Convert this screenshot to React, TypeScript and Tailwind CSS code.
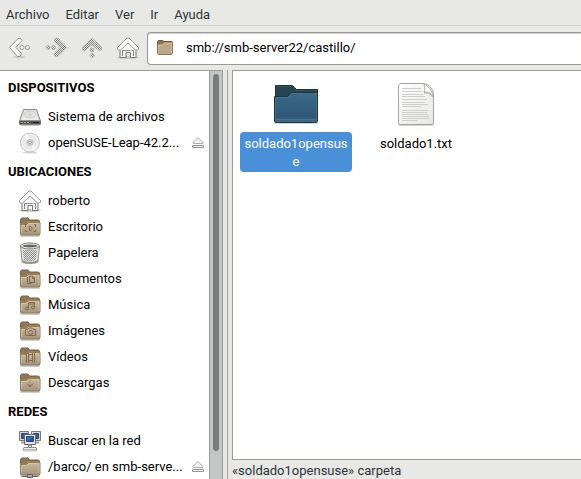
import { useId, type ReactNode } from "react";

type FolderEmblem = "desktop" | "documents" | "music" | "pictures" | "videos" | "downloads" | "network";

function Stipple({ id }: { id: string }) {
  return (
    <pattern id={id} width="2" height="2" patternUnits="userSpaceOnUse">
      <rect width="2" height="2" fill="#e8e8e7" />
      <rect width="1" height="1" fill="#858684" />
      <rect x="1" y="1" width="1" height="1" fill="#858684" />
    </pattern>
  );
}

function BackIcon() {
  return (
    <svg width="24" height="24" viewBox="0 0 24 24" aria-hidden="true">
      <ellipse cx="11" cy="21" rx="6" ry="1.500" fill="#cbcbca" />
      <path d="M10 2.500h2.500l1.500 2L8 11.500l5.500 6-1.500 3h-2.500L1.500 11.500z" fill="#f8f8f8" stroke="#8f908e" strokeLinejoin="round" />
      <circle cx="14" cy="11.500" r="2" fill="#f4f4f4" stroke="#999a98" />
      <circle cx="19.500" cy="11.500" r="2" fill="#f4f4f4" stroke="#999a98" />
    </svg>
  );
}

function ForwardIcon() {
  const id = useId();
  return (
    <svg width="24" height="24" viewBox="0 0 24 24" aria-hidden="true">
      <Stipple id={id} />
      <path d="M14 2h-3l-1 3 6 6.500-6 6 1 3h3l9-9z" fill={`url(#${id})`} stroke="#a8a9a7" strokeWidth=".5" />
      <g fill={`url(#${id})`} stroke="#b3b4b2">
        <circle cx="4" cy="11.500" r="2" />
        <circle cx="9.500" cy="11.500" r="2" />
      </g>
    </svg>
  );
}

function UpIcon() {
  const id = useId();
  return (
    <svg width="24" height="24" viewBox="0 0 24 24" aria-hidden="true">
      <Stipple id={id} />
      <path d="M12 2l-9.500 9v3l2 1 7.500-6 7.500 6 2-1v-3z" fill={`url(#${id})`} stroke="#a8a9a7" strokeWidth=".5" />
      <g fill={`url(#${id})`} stroke="#b3b4b2">
        <circle cx="12" cy="14" r="2" />
        <circle cx="12" cy="19.500" r="2" />
      </g>
    </svg>
  );
}

function HomeIcon() {
  return (
    <svg width="24" height="24" viewBox="0 0 24 24" aria-hidden="true">
      <ellipse cx="12" cy="21.500" rx="11" ry="1.500" fill="#c6c6c5" />
      <path d="M4 11v10.500h6v-5h4.500v5H20V11L12 4z" fill="#f4f4f4" stroke="#777876" />
      <path d="M6.500 20v-5.500h3M17.500 20v-5.500h-2M9.500 14.500h5" fill="none" stroke="#898a88" />
      <path d="M1.500 11.500L11 2h2l9.500 9.500v1.500l-1 1h-2L12 7l-7.500 7h-2l-1-1z" fill="#fcfcfc" stroke="#969795" strokeLinejoin="round" />
    </svg>
  );
}

function Emblem({ kind }: { kind: FolderEmblem }) {
  switch (kind) {
    case "desktop":
      return <path d="M7.500 12v-2.500H9M7.500 15v1.500H9M16 9.500h1.500V12M16 16.500h1.500V15M11.500 11.500v4h1l1.500-1v-2l-1.500-1z" />;
    case "documents":
      return <path d="M9.500 10v6.500h4M11.500 9h3l2 2v4.500h-5zM14.500 9v2.500H16" />;
    case "music":
      return (
        <>
          <path d="M10.500 15.500v-6h6v5M10.500 11h6" />
          <circle cx="9" cy="15.500" r="1.500" />
          <circle cx="15" cy="14.500" r="1.500" />
        </>
      );
    case "pictures":
      return (
        <>
          <path d="M7.500 10.500h2l1-1.500h4l1 1.500h2v6h-10z" />
          <circle cx="12.500" cy="13.500" r="2" />
        </>
      );
    case "videos":
      return <path d="M8.500 8v9.500M16.500 8v9.500M10.500 8v9.500M14.500 8v9.500M10.500 9.500h4M10.500 15.500h4" />;
    case "downloads":
      return <path d="M12 8.500v1M12 11v1M12 13v3M9 12.500l3 3.500 3-3.500" />;
    case "network":
      return (
        <g stroke="#62635f">
          <path d="M4 21.500h16" />
          <path d="M9.500 19.500h5v3h-5z" fill="#aaa" />
        </g>
      );
  }
}

function FolderIcon({ emblem }: { emblem?: FolderEmblem }) {
  const id = useId();
  return (
    <svg width="24" height="24" viewBox="0 0 24 24" aria-hidden="true">
      <linearGradient id={id} x2="0" y2="1">
        <stop stopColor="#c6b99f" />
        <stop offset="1" stopColor="#a59479" />
      </linearGradient>
      <rect x="2" y="19" width="20" height="3" rx="1" fill="#d0cfcd" />
      <path d="M2.500 18V4.500l1-1.500H10l1.500 2h9l1 1v12z" fill="#8b7658" stroke="#78634b" />
      <path d="M2.500 9.500H8l2.500-2h11.500v11.500l-1 1h-17.500l-1-1z" fill={`url(#${id})`} stroke="#8c7960" strokeLinejoin="round" />
      <path d="M2.500 9H7.500l2.500-2h11.500" fill="none" stroke="#b08443" />
      <path d="M3.500 18V10.500h5l2.500-2h10V18" fill="none" stroke="#d6cbb5" strokeOpacity=".7" />
      {emblem && (
        <g fill="none" stroke="#7e6b51">
          <Emblem kind={emblem} />
        </g>
      )}
    </svg>
  );
}

function SmallFolderIcon() {
  return (
    <svg width="18" height="18" viewBox="0 0 18 18" aria-hidden="true">
      <path d="M1.500 14V2.500L2.500 1.500h4l1.500 1h8V14z" fill="#8c7454" stroke="#6d543b" />
      <path d="M1.500 5.500h4l2-2h9V14l-1 1.500h-13l-1-1z" fill="#b8a78c" stroke="#8d7350" />
      <path d="M2 5.500h4l2-2h8.500" fill="none" stroke="#be914d" />
      <path d="M2.500 13.500v-7H6l2-2h7.500v9" fill="none" stroke="#cfbea0" />
    </svg>
  );
}

function DriveIcon() {
  return (
    <svg width="24" height="24" viewBox="0 0 24 24" aria-hidden="true">
      <path d="M5.500 4.500h13l4 11.500v3l-1 1h-19l-1-1v-3z" fill="#d8d9d7" stroke="#8d8e8c" strokeLinejoin="round" />
      <path d="M6.500 5.500h11l3 9.500h-17z" fill="#ededec" />
      <ellipse cx="12" cy="9.500" rx="6" ry="3.500" fill="#e1e1e0" stroke="#cbccc9" />
      <ellipse cx="12" cy="9.500" rx="1.500" ry="1" fill="#c4c4c3" />
      <path d="M1.500 15.500h21v4h-21z" fill="#555753" />
      <path d="M2 15.500h20" stroke="#989996" />
      <path d="M3 17.500h2m1 0h2m1 0h2" stroke="#a2a3a0" />
      <path d="M15 17.500h6" stroke="#252624" />
    </svg>
  );
}

function DiscIcon() {
  return (
    <svg width="24" height="24" viewBox="0 0 24 24" aria-hidden="true">
      <ellipse cx="12" cy="21.500" rx="7" ry="1" fill="#d4d4d4" />
      <circle cx="12" cy="11.500" r="9.500" fill="#e9e9e8" stroke="#c3c3c1" />
      <path d="M5.500 5.500L12 11.500 8.500 3zM18.500 17.500L12 11.500l3.500 8.500z" fill="#fff" />
      <circle cx="12" cy="11.500" r="8" fill="none" stroke="#f7f7f7" />
      <circle cx="12" cy="11.500" r="3" fill="#dddddb" stroke="#bbbcb9" />
      <circle cx="12" cy="11.500" r="1.500" fill="#fff" stroke="#a7a8a6" />
    </svg>
  );
}

function TrashIcon() {
  const id = useId();
  return (
    <svg width="24" height="24" viewBox="0 0 24 24" aria-hidden="true">
      <pattern id={id} width="2" height="2" patternUnits="userSpaceOnUse">
        <rect width="2" height="2" fill="#dededd" />
        <path d="M0 0h1v1H0zM1 1h1v1H1z" fill="#91928f" />
      </pattern>
      <ellipse cx="12" cy="21" rx="9" ry="2" fill="#bbb" />
      <path d="M2.500 5l1.500 15c2 3 14 3 16 0l1.500-15z" fill="#e3e4e2" stroke="#8d8f8b" />
      <path d="M5 9l1 10c2 1.500 10 1.500 12 0l1-10z" fill={`url(#${id})`} />
      <ellipse cx="12" cy="5" rx="9.500" ry="3" fill="#eeeeec" stroke="#777975" />
      <ellipse cx="12" cy="5" rx="7.500" ry="1.500" fill="#646662" />
      <path d="M4.500 19.500c2 2.500 13 2.500 15 0" fill="none" stroke="#80817e" />
    </svg>
  );
}

function NetworkIcon() {
  return (
    <svg width="24" height="24" viewBox="0 0 24 24" aria-hidden="true">
      <path d="M1.500 2.500h9v9h-9zM13.500 2.500h9v9h-9z" fill="#dadbd8" stroke="#777974" />
      <path d="M3.500 4.500h6v5h-6zM15.500 4.500h5v5h-5z" fill="#315b9a" stroke="#244777" />
      <path d="M3 13.500h4M17 13.500h4" stroke="#9a9c97" strokeWidth="2" />
      <path d="M6.500 5.500h11v10h-11z" fill="#e2e3e0" stroke="#696c68" />
      <path d="M8.500 7.500h7v5h-7z" fill="#3871b8" stroke="#1f4c86" />
      <path d="M9 12l6-4v4z" fill="#285892" />
      <path d="M10.500 16h3v3h-3z" fill="#dadbd8" stroke="#80827d" />
      <path d="M6 18.500h12l1 2.500H5z" fill="#eeeeec" stroke="#888a85" />
      <path d="M5 22h14" stroke="#cececc" />
    </svg>
  );
}

function EjectIcon() {
  return (
    <svg width="14" height="14" viewBox="0 0 14 14" aria-hidden="true">
      <path d="M7 1.500l5 5v1H2v-1z" fill="#f0f0ef" stroke="#b0b1ae" />
      <path d="M1.500 9.500h11v2h-11z" fill="#f9f9f9" stroke="#949692" />
    </svg>
  );
}

function LargeFolderIcon() {
  const id = useId();
  return (
    <svg width="48" height="48" viewBox="0 0 48 48" aria-hidden="true">
      <linearGradient id={id} x2="0" y2="1">
        <stop stopColor="#3b6b8b" />
        <stop offset=".8" stopColor="#305876" />
        <stop offset="1" stopColor="#416d8a" />
      </linearGradient>
      <rect x="2" y="42" width="44" height="2" rx="1" fill="#cfd8df" />
      <path d="M3.500 40V5.500h17l4 4h21V40z" fill="#264553" stroke="#1e3429" />
      <path d="M4.500 6.500h15l4 4h21" fill="none" stroke="#34535f" />
      <path d="M2.500 16.500h13l4-4h26v29l-1 1h-41l-1-1z" fill={`url(#${id})`} stroke="#1e3634" />
      <path d="M3.500 40V17.500H16l4-4h24.500V40" fill="none" stroke="#527e9a" strokeOpacity=".5" />
      <path d="M4 39.500h40" stroke="#47738f" />
    </svg>
  );
}

function TextFileIcon() {
  const id = useId();
  return (
    <svg width="48" height="48" viewBox="0 0 48 48" aria-hidden="true">
      <linearGradient id={id} x1="0" y1="0" x2="1" y2="1">
        <stop stopColor="#fff" />
        <stop offset="1" stopColor="#e6e6e5" />
      </linearGradient>
      <rect x="6" y="43" width="36" height="3" rx="1" fill="#d4d4d4" />
      <path d="M6.500 5l1.500-1.500h24c5 1 9 5 9.500 11V43l-1.500 1.500H8L6.500 43z" fill={`url(#${id})`} stroke="#a3a4a2" />
      <path
        d="M10 8.500h19M10 11.500h20M10 14.500h21M10 16.500h23M10 19.500h25M10 22.500h23M10 24.500h26M10 26.500h19M10 30.500h26M10 32.500h25M10 34.500h26M10 36.500h27M10 38.500h27M10 40.500h15"
        stroke="#cececd"
      />
      <path d="M32 4c1 3 1 6 0 8.500 2-1 7-.5 9 4-.500-5.500-3.500-10-9-12.500z" fill="#fafafa" stroke="#b2b3b0" />
      <path d="M32 13c3-.500 6.500.5 8.500 4" fill="none" stroke="#a7a7a6" />
    </svg>
  );
}

type Place = { label: string; icon: ReactNode; ejectable?: boolean };

const sections: { title: string; places: Place[] }[] = [
  {
    title: "DISPOSITIVOS",
    places: [
      { label: "Sistema de archivos", icon: <DriveIcon /> },
      { label: "openSUSE-Leap-42.2...", icon: <DiscIcon />, ejectable: true },
    ],
  },
  {
    title: "UBICACIONES",
    places: [
      { label: "roberto", icon: <HomeIcon /> },
      { label: "Escritorio", icon: <FolderIcon emblem="desktop" /> },
      { label: "Papelera", icon: <TrashIcon /> },
      { label: "Documentos", icon: <FolderIcon emblem="documents" /> },
      { label: "Música", icon: <FolderIcon emblem="music" /> },
      { label: "Imágenes", icon: <FolderIcon emblem="pictures" /> },
      { label: "Vídeos", icon: <FolderIcon emblem="videos" /> },
      { label: "Descargas", icon: <FolderIcon emblem="downloads" /> },
    ],
  },
  {
    title: "REDES",
    places: [
      { label: "Buscar en la red", icon: <NetworkIcon /> },
      { label: "/barco/ en smb-serve...", icon: <FolderIcon emblem="network" />, ejectable: true },
    ],
  },
];

function Sidebar() {
  return (
    <aside className="flex w-[223px] shrink-0 overflow-hidden border-t border-[#9b9c98] bg-white">
      <nav className="min-w-0 flex-1 pt-px">
        {sections.map((section) => (
          <section key={section.title}>
            <h2 className="flex h-8 items-center pl-2 font-bold">{section.title}</h2>
            <ul>
              {section.places.map((place) => (
                <li key={place.label} className="flex h-[26px] items-center pr-1">
                  <button className="flex min-w-0 flex-1 items-center gap-1.5 whitespace-nowrap pl-[18px] text-left">
                    <span className="shrink-0">{place.icon}</span>
                    {place.label}
                  </button>
                  {place.ejectable && (
                    <button aria-label={`Expulsar ${place.label}`} className="shrink-0">
                      <EjectIcon />
                    </button>
                  )}
                </li>
              ))}
            </ul>
          </section>
        ))}
      </nav>
      <div className="flex w-3.5 shrink-0 flex-col items-center border-x border-[#989b98] bg-[#c3c6c4] pt-[3px]">
        <div className="h-[377px] w-1.5 rounded-full bg-[#777d7e]" />
      </div>
    </aside>
  );
}

export default function App() {
  return (
    <div className="flex h-screen flex-col overflow-hidden bg-[#e8e8e7] font-[Roboto,'Noto_Sans',sans-serif] text-[13px] leading-[18px] text-black">
      <nav className="flex h-[26px] shrink-0 items-center gap-4 border-b border-[#d0d0ce] px-1.5 pt-1 text-[#2e3436]">
        {["Archivo", "Editar", "Ver", "Ir", "Ayuda"].map((item) => (
          <button key={item}>{item}</button>
        ))}
      </nav>
      <header className="flex h-11 shrink-0 items-center pl-0.5">
        <button aria-label="Atrás" className="flex h-8 w-9 items-center justify-center"><BackIcon /></button>
        <button aria-label="Adelante" disabled className="flex h-8 w-9 items-center justify-center"><ForwardIcon /></button>
        <button aria-label="Subir" disabled className="flex h-8 w-9 items-center justify-center"><UpIcon /></button>
        <button aria-label="Carpeta personal" className="flex h-8 w-9 items-center justify-center"><HomeIcon /></button>
        <label className="ml-px flex h-[33px] min-w-0 flex-1 items-center gap-3 rounded-l-[4px] border border-r-0 border-[#999b97] bg-white pl-2 shadow-[inset_0_1px_1px_#cfcfce]">
          <SmallFolderIcon />
          <input aria-label="Ubicación" defaultValue="smb://smb-server22/castillo/" className="min-w-0 flex-1 bg-transparent outline-none" />
        </label>
      </header>
      <div className="flex min-h-0 flex-1">
        <Sidebar />
        <div className="ml-1 w-[5px] shrink-0 border-l border-[#a3a5a1]" />
        <div className="flex min-w-0 flex-1 flex-col">
          <main className="flex min-h-0 flex-1 items-start gap-2 border-y border-l border-[#9b9c98] bg-white pl-[7px] pt-[9px]">
            <button className="flex w-28 flex-col items-center gap-1">
              <LargeFolderIcon />
              <span className="w-full break-all rounded-[4px] bg-[#4a90d9] px-1 pb-px pt-[3px] text-center text-white">soldado1opensuse</span>
            </button>
            <button className="flex w-28 flex-col items-center gap-1">
              <TextFileIcon />
              <span className="w-full px-1 pb-px pt-[3px] text-center">soldado1.txt</span>
            </button>
          </main>
          <footer className="flex h-[19px] shrink-0 items-center pt-0.5 text-[#2e3436]">«soldado1opensuse» carpeta</footer>
        </div>
      </div>
    </div>
  );
}
